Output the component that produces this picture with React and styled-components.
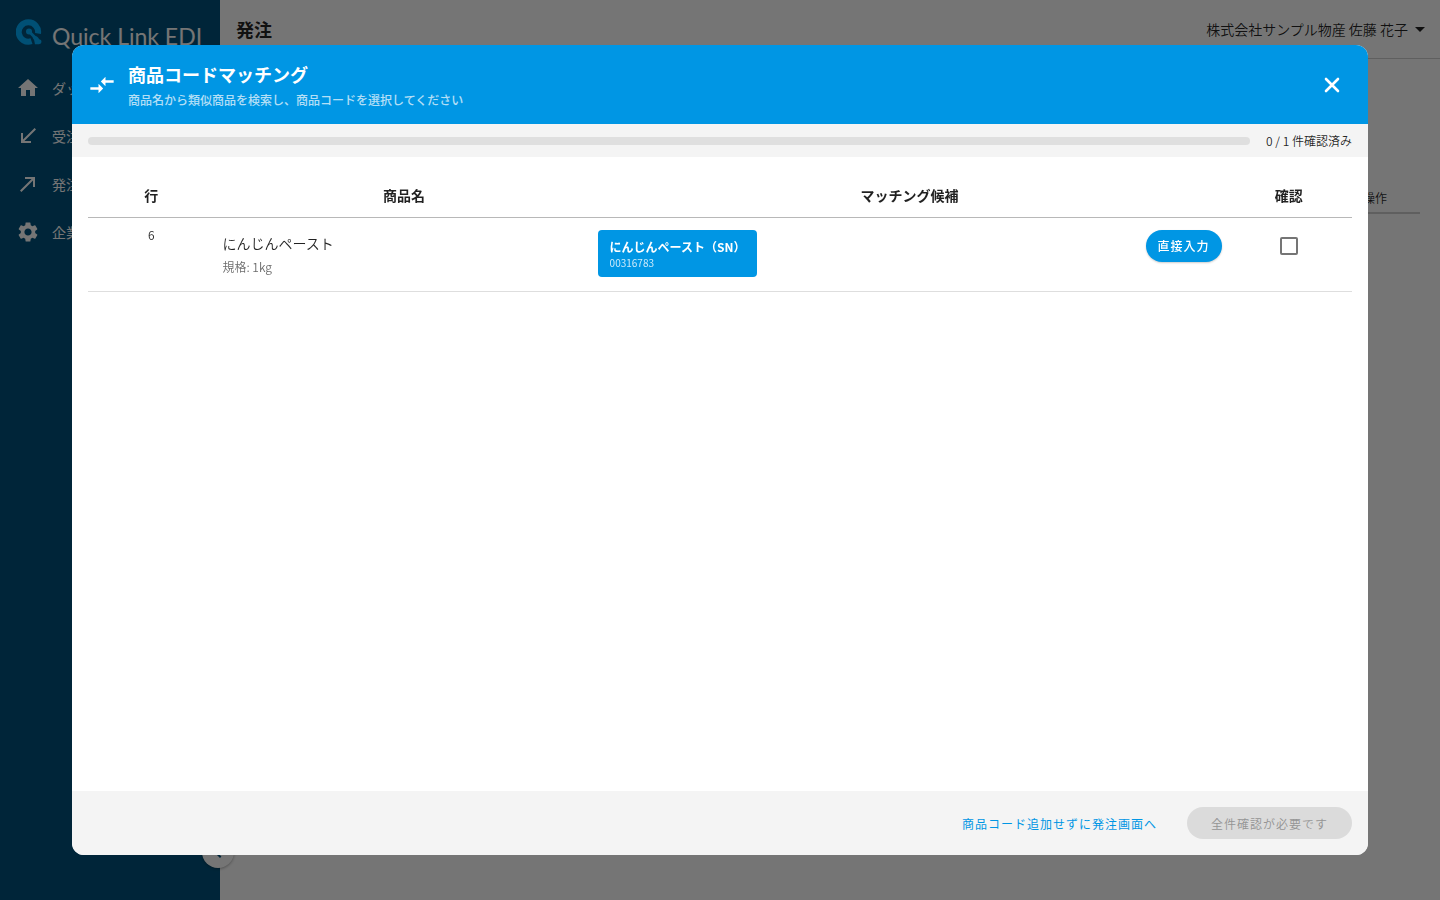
import { useState } from 'react'
import styled, { createGlobalStyle } from 'styled-components'
import { MdHome, MdCallReceived, MdCallMade, MdSettings, MdArrowDropDown, MdChevronLeft } from 'react-icons/md'

const colors = {
  primary: '#0096e4',
  sidebar: '#00527c',
  text: 'rgba(0, 0, 0, 0.87)',
  muted: 'rgba(0, 0, 0, 0.6)',
  bar: '#f4f4f4',
  white: '#ffffff'
}

const GlobalStyle = createGlobalStyle`
  * {
    box-sizing: border-box;
  }

  body {
    margin: 0;
    font-family: 'Noto Sans CJK JP', 'Noto Sans', sans-serif;
    font-size: 14px;
    font-weight: 350;
    color: ${colors.text};
  }

  button {
    font-family: inherit;
    font-weight: inherit;
    cursor: pointer;
  }

  h1, h2, p {
    margin: 0;
  }
`

const Page = styled.div`
  display: flex;
  min-height: 100vh;
  background: ${colors.white};
`

const Sidebar = styled.nav`
  position: relative;
  flex: none;
  width: 220px;
  background: ${colors.sidebar};
  color: ${colors.white};
`

const Brand = styled.div`
  display: flex;
  align-items: center;
  gap: 10px;
  height: 64px;
  padding: 0 16px;
`

const BrandLogo = styled.svg`
  flex: none;
`

const BrandName = styled.span`
  padding-top: 8px;
  font-family: Lato, sans-serif;
  font-size: 23px;
  font-weight: 400;
  line-height: 28px;
  white-space: nowrap;
`

const NavItem = styled.a`
  display: flex;
  align-items: center;
  gap: 12px;
  height: 48px;
  padding: 0 16px;
  color: inherit;
  font-weight: 400;
  text-decoration: none;

  svg {
    flex: none;
  }
`

const NavLabel = styled.span`
  line-height: 20px;
  white-space: nowrap;
`

const CollapseButton = styled.button`
  position: absolute;
  right: -14px;
  bottom: 32px;
  display: flex;
  align-items: center;
  justify-content: center;
  width: 32px;
  height: 32px;
  padding: 0;
  border: 0;
  border-radius: 50%;
  background: ${colors.white};
  color: ${colors.sidebar};
  box-shadow: 0 1px 3px rgba(0, 0, 0, 0.3);
`

const Main = styled.main`
  flex: 1;
`

const TopBar = styled.header`
  display: flex;
  align-items: center;
  justify-content: space-between;
  height: 59px;
  padding: 0 8px 0 16px;
  border-bottom: 1px solid #d0d0d0;
`

const PageTitle = styled.h1`
  font-size: 18px;
  font-weight: 700;
`

const UserMenu = styled.button`
  display: flex;
  align-items: center;
  padding: 0;
  border: 0;
  background: none;
  color: inherit;
  font-size: 14px;
`

const OrderTable = styled.table`
  width: calc(100% - 40px);
  margin: 123px 20px 0;
  border-collapse: collapse;
`

const OrderHead = styled.th`
  height: 31px;
  padding: 0 33px;
  border-bottom: 2px solid #d0d0d0;
  font-size: 12px;
  font-weight: 350;
  text-align: right;
`

const Overlay = styled.div`
  position: fixed;
  inset: 0;
  display: flex;
  align-items: center;
  justify-content: center;
  background: rgba(0, 0, 0, 0.54);
`

const Dialog = styled.section`
  display: flex;
  flex-direction: column;
  width: 90%;
  height: 90%;
  overflow: hidden;
  border-radius: 12px;
  background: ${colors.white};
`

const DialogHeader = styled.header`
  display: flex;
  align-items: center;
  gap: 12px;
  padding: 14px 16px;
  background: ${colors.primary};
  color: ${colors.white};
`

const DialogHeading = styled.div`
  flex: 1;
`

const DialogTitle = styled.h2`
  font-size: 18px;
  font-weight: 700;
  line-height: 31px;
`

const DialogLead = styled.p`
  font-size: 12px;
  font-weight: 500;
  line-height: 20px;
  opacity: 0.7;
`

const CloseButton = styled.button`
  display: flex;
  align-items: center;
  justify-content: center;
  width: 40px;
  height: 40px;
  padding: 0;
  border: 0;
  background: none;
  color: inherit;
`

const ProgressRow = styled.div`
  display: flex;
  align-items: center;
  gap: 16px;
  height: 33px;
  padding: 0 16px;
  background: ${colors.bar};
`

const ProgressTrack = styled.div`
  flex: 1;
  height: 8px;
  overflow: hidden;
  border-radius: 4px;
  background: #dfdfdf;
`

const ProgressFill = styled.div`
  height: 100%;
  background: ${colors.primary};
`

const ProgressLabel = styled.span`
  font-size: 12px;
`

const DialogBody = styled.div`
  flex: 1;
  overflow: auto;
  padding: 16px;
`

const MatchTable = styled.table`
  width: 100%;
  border-collapse: collapse;
  table-layout: fixed;
`

const HeadCell = styled.th`
  width: ${({ $width }) => $width};
  height: 44px;
  padding: 0;
  border-bottom: 1px solid #b8b8b8;
  font-size: 14px;
  font-weight: 700;
`

const Cell = styled.td`
  height: 74px;
  padding: ${({ $padding }) => $padding || '12px 4px'};
  border-bottom: 1px solid #dedede;
  text-align: ${({ $align }) => $align || 'left'};
  vertical-align: top;
`

const RowNumber = styled.span`
  display: block;
  font-size: 12px;
  line-height: 10px;
`

const ProductName = styled.p`
  line-height: 26px;
`

const ProductSpec = styled.p`
  color: ${colors.muted};
  font-size: 12px;
  line-height: 22px;
`

const Candidates = styled.div`
  display: flex;
  align-items: flex-start;
  justify-content: space-between;
`

const CandidateButton = styled.button`
  display: flex;
  flex-direction: column;
  padding: 8px 12px;
  border: 0;
  border-radius: 4px;
  background: ${colors.primary};
  color: ${colors.white};
  text-align: left;
`

const CandidateName = styled.span`
  font-size: 12px;
  font-weight: 700;
  line-height: 18px;
`

const CandidateCode = styled.span`
  font-size: 10px;
  font-weight: 400;
  line-height: 13px;
  opacity: 0.8;
`

const PillButton = styled.button`
  height: 32px;
  padding: 0 ${({ $wide }) => ($wide ? '24px' : '12px')};
  border: 0;
  border-radius: 16px;
  background: ${colors.primary};
  color: ${colors.white};
  font-size: 12px;
  font-weight: 500;
  letter-spacing: 1px;
  box-shadow: 0 1px 2px rgba(0, 0, 0, 0.2);

  &:disabled {
    background: #dbdbdb;
    color: #949494;
    font-weight: 350;
    box-shadow: none;
  }
`

const TextButton = styled.button`
  padding: 0;
  border: 0;
  background: none;
  color: ${colors.primary};
  font-size: 12px;
  font-weight: 400;
  letter-spacing: 1px;
`

const CheckBox = styled.input`
  appearance: none;
  width: 18px;
  height: 18px;
  margin: 7px 0 0;
  border: 2px solid #757575;
  border-radius: 2px;

  &:checked {
    border-color: ${colors.primary};
    background: ${colors.primary};
  }
`

const DialogFooter = styled.footer`
  display: flex;
  align-items: center;
  justify-content: flex-end;
  gap: 30px;
  height: 64px;
  padding: 0 16px;
  background: ${colors.bar};
`

const navItems = [
  { label: 'ダッシュボード', Icon: MdHome },
  { label: '受注', Icon: MdCallReceived },
  { label: '発注', Icon: MdCallMade },
  { label: '企業設定', Icon: MdSettings }
]

const items = [
  { row: 6, name: 'にんじんペースト', spec: '1kg', candidates: [{ name: 'にんじんペースト（SN）', code: '00316783' }] }
]

function Logo() {
  return (
    <BrandLogo width="26" height="26" viewBox="0 0 26 26" fill="none" aria-hidden="true">
      <path d="M15.500 22.200A9.700 9.700 0 1 1 22 14.500" stroke="#00aeff" strokeWidth="6" />
      <circle cx="13" cy="12.500" r="3" fill="#00aeff" />
      <path d="M13 12.500L19 18.500" stroke="#00aeff" strokeWidth="3" />
      <path d="M16.500 18.500Q20 15.500 22 18.500Q23 20.500 25 21Q26.500 25 23 25.300H19Q19 21 16.500 18.500z" fill="#00aeff" />
    </BrandLogo>
  )
}

function MergeIcon() {
  return (
    <svg width="28" height="28" viewBox="0 0 24 24" fill="currentColor" aria-hidden="true">
      <path d="M9.010 14H2v2h7.010v3L13 15l-3.990-4zm5.980-1v-3H22V8h-7.010V5L11 9z" />
    </svg>
  )
}

function CloseIcon() {
  return (
    <svg width="24" height="24" viewBox="0 0 24 24" fill="none" stroke="currentColor" strokeWidth="2.600" strokeLinecap="round" aria-hidden="true">
      <path d="M6 6l12 12M18 6L6 18" />
    </svg>
  )
}

function App() {
  const [confirmed, setConfirmed] = useState([])

  const handleConfirmChange = (row) => () => {
    setConfirmed(confirmed.includes(row) ? confirmed.filter((r) => r !== row) : [...confirmed, row])
  }

  const isDone = confirmed.length === items.length

  return (
    <>
      <GlobalStyle />
      <Page>
        <Sidebar>
          <Brand>
            <Logo />
            <BrandName>Quick Link EDI</BrandName>
          </Brand>
          {navItems.map(({ label, Icon }) => (
            <NavItem key={label} href="#">
              <Icon size={24} />
              <NavLabel>{label}</NavLabel>
            </NavItem>
          ))}
          <CollapseButton aria-label="メニューを閉じる"><MdChevronLeft size={24} /></CollapseButton>
        </Sidebar>
        <Main>
          <TopBar>
            <PageTitle>発注</PageTitle>
            <UserMenu>株式会社サンプル物産 佐藤 花子<MdArrowDropDown size={24} /></UserMenu>
          </TopBar>
          <OrderTable>
            <thead>
              <tr><OrderHead>操作</OrderHead></tr>
            </thead>
          </OrderTable>
        </Main>
      </Page>
      <Overlay>
        <Dialog role="dialog" aria-labelledby="matching-title">
          <DialogHeader>
            <MergeIcon />
            <DialogHeading>
              <DialogTitle id="matching-title">商品コードマッチング</DialogTitle>
              <DialogLead>商品名から類似商品を検索し、商品コードを選択してください</DialogLead>
            </DialogHeading>
            <CloseButton aria-label="閉じる"><CloseIcon /></CloseButton>
          </DialogHeader>
          <ProgressRow>
            <ProgressTrack>
              <ProgressFill style={{ width: `${(confirmed.length / items.length) * 100}%` }} />
            </ProgressTrack>
            <ProgressLabel>{confirmed.length} / {items.length} 件確認済み</ProgressLabel>
          </ProgressRow>
          <DialogBody>
            <MatchTable>
              <thead>
                <tr>
                  <HeadCell $width="10%">行</HeadCell>
                  <HeadCell $width="30%">商品名</HeadCell>
                  <HeadCell $width="50%">マッチング候補</HeadCell>
                  <HeadCell $width="10%">確認</HeadCell>
                </tr>
              </thead>
              <tbody>
                {items.map(({ row, name, spec, candidates }) => (
                  <tr key={row}>
                    <Cell $align="center"><RowNumber>{row}</RowNumber></Cell>
                    <Cell $padding="12px 8px">
                      <ProductName>{name}</ProductName>
                      <ProductSpec>規格: {spec}</ProductSpec>
                    </Cell>
                    <Cell>
                      <Candidates>
                        {candidates.map((candidate) => (
                          <CandidateButton key={candidate.code}>
                            <CandidateName>{candidate.name}</CandidateName>
                            <CandidateCode>{candidate.code}</CandidateCode>
                          </CandidateButton>
                        ))}
                        <PillButton>直接入力</PillButton>
                      </Candidates>
                    </Cell>
                    <Cell $align="center">
                      <CheckBox
                        type="checkbox"
                        aria-label={`${name}を確認`}
                        checked={confirmed.includes(row)}
                        onChange={handleConfirmChange(row)}
                      />
                    </Cell>
                  </tr>
                ))}
              </tbody>
            </MatchTable>
          </DialogBody>
          <DialogFooter>
            <TextButton>商品コード追加せずに発注画面へ</TextButton>
            <PillButton $wide disabled={!isDone}>{isDone ? '確定する' : '全件確認が必要です'}</PillButton>
          </DialogFooter>
        </Dialog>
      </Overlay>
    </>
  )
}

export default App
